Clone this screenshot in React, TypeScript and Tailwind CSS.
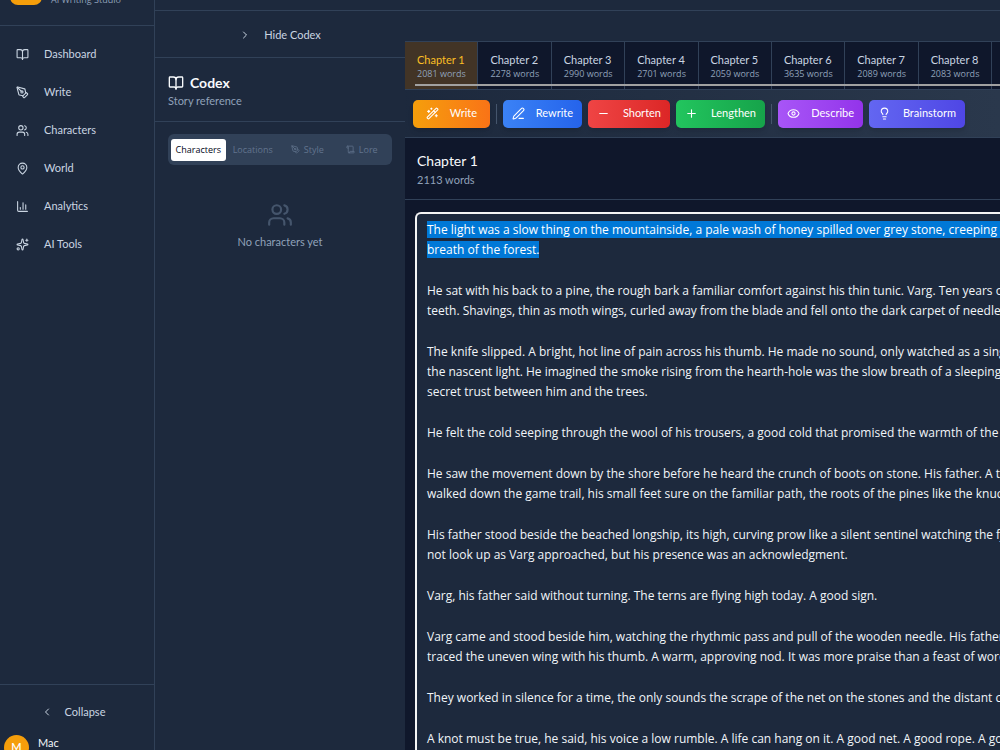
import { useState } from 'react';
import type { ReactNode } from 'react';
import type { LucideIcon } from 'lucide-react';
import {
  BookOpen,
  ChartColumn,
  ChevronLeft,
  ChevronRight,
  Eye,
  Lightbulb,
  MapPin,
  Minus,
  PenLine,
  PenTool,
  Plus,
  Scroll,
  Sparkles,
  Users,
  WandSparkles,
} from 'lucide-react';

const NAV_ITEMS: { label: string; icon: LucideIcon }[] = [
  { label: 'Dashboard', icon: BookOpen },
  { label: 'Write', icon: PenTool },
  { label: 'Characters', icon: Users },
  { label: 'World', icon: MapPin },
  { label: 'Analytics', icon: ChartColumn },
  { label: 'AI Tools', icon: Sparkles },
];

const CHAPTERS = [
  { title: 'Chapter 1', words: 2081 },
  { title: 'Chapter 2', words: 2278 },
  { title: 'Chapter 3', words: 2990 },
  { title: 'Chapter 4', words: 2701 },
  { title: 'Chapter 5', words: 2059 },
  { title: 'Chapter 6', words: 3635 },
  { title: 'Chapter 7', words: 2089 },
  { title: 'Chapter 8', words: 2083 },
];

// Each paragraph is a list of lines
const PARAGRAPHS = [
  [
    'The light was a slow thing on the mountainside, a pale wash of honey spilled over grey stone, creeping down',
    'breath of the forest.',
  ],
  [
    'He sat with his back to a pine, the rough bark a familiar comfort against his thin tunic. Varg. Ten years old',
    'teeth. Shavings, thin as moth wings, curled away from the blade and fell onto the dark carpet of needles',
  ],
  [
    'The knife slipped. A bright, hot line of pain across his thumb. He made no sound, only watched as a single',
    'the nascent light. He imagined the smoke rising from the hearth-hole was the slow breath of a sleeping giant',
    'secret trust between him and the trees.',
  ],
  ['He felt the cold seeping through the wool of his trousers, a good cold that promised the warmth of the fire'],
  [
    'He saw the movement down by the shore before he heard the crunch of boots on stone. His father. A tall',
    'walked down the game trail, his small feet sure on the familiar path, the roots of the pines like the knuckles',
  ],
  [
    'His father stood beside the beached longship, its high, curving prow like a silent sentinel watching the fjord',
    'not look up as Varg approached, but his presence was an acknowledgment.',
  ],
  ['Varg, his father said without turning. The terns are flying high today. A good sign.'],
  [
    'Varg came and stood beside him, watching the rhythmic pass and pull of the wooden needle. His father gave',
    'traced the uneven wing with his thumb. A warm, approving nod. It was more praise than a feast of words.',
  ],
  ['They worked in silence for a time, the only sounds the scrape of the net on the stones and the distant cry'],
  ['A knot must be true, he said, his voice a low rumble. A life can hang on it. A good net. A good rope. A good'],
];

function Sidebar() {
  return (
    <aside className="flex w-[155px] shrink-0 flex-col border-r border-slate-700 bg-slate-800">
      <div className="flex h-[26px] items-end gap-[9px] border-b border-slate-700 pb-5 pl-[10px]">
        <div className="h-8 w-8 shrink-0 rounded-lg bg-[#f59e0b]" />
        <p className="font-['Open_Sans',sans-serif] text-[9px] leading-[10px] whitespace-nowrap text-slate-400">
          AI Writing Studio
        </p>
      </div>

      <nav className="flex flex-1 flex-col gap-2 px-2 pt-[13px]">
        {NAV_ITEMS.map(({ label, icon: Icon }) => (
          <a
            key={label}
            href="#"
            className="flex h-[30px] items-center gap-[15px] rounded-md pl-2 text-[11px] text-slate-300 hover:bg-slate-700"
          >
            <Icon className="h-[13px] w-[13px]" />
            {label}
          </a>
        ))}
      </nav>

      <div className="h-[66px] border-t border-slate-700 pt-3">
        <button type="button" className="flex h-[30px] w-full items-center justify-center gap-3 pr-2 text-[11px] text-slate-300">
          <ChevronLeft className="h-3 w-3" />
          Collapse
        </button>
        <div className="flex items-start gap-[9px] pt-2 pl-1">
          <span className="flex h-[25px] w-[25px] shrink-0 items-center justify-center rounded-full bg-[#f59e0b] text-[11px] font-semibold text-white">
            M
          </span>
          <span className="text-[11px] leading-4 text-slate-100">Mac</span>
        </div>
      </div>
    </aside>
  );
}

function CodexTab({ label, icon: Icon, active, onSelect }: { label: string; icon?: LucideIcon; active: boolean; onSelect: () => void }) {
  return (
    <button
      type="button"
      role="tab"
      aria-selected={active}
      onClick={onSelect}
      className={`flex h-[22px] items-center justify-center gap-1 rounded-[3px] font-['Open_Sans',sans-serif] text-[9px] ${
        active ? 'bg-white text-slate-950' : 'text-slate-500'
      }`}
    >
      {Icon && <Icon className="h-[9px] w-[9px]" />}
      {label}
    </button>
  );
}

function Codex() {
  const [tab, setTab] = useState('Characters');

  return (
    <section className="w-[250px] shrink-0 bg-slate-800">
      <div className="flex h-[47px] items-center justify-center border-b border-slate-700">
        <button type="button" className="flex items-center gap-[13px] pt-0.5 text-[11px] text-slate-300">
          <ChevronRight className="h-3 w-3" />
          Hide Codex
        </button>
      </div>

      <div className="h-16 border-b border-slate-700 px-[13px] pt-4">
        <h2 className="flex items-center gap-[6px] text-[14px] leading-[18px] font-bold text-slate-50">
          <BookOpen className="h-4 w-4" />
          Codex
        </h2>
        <p className="text-[11px] leading-[18px] text-slate-400">Story reference</p>
      </div>

      <div className="px-[13px] pt-3">
        <div role="tablist" className="grid h-[31px] grid-cols-4 items-center rounded-md bg-slate-700 px-[3px]">
          <CodexTab label="Characters" active={tab === 'Characters'} onSelect={() => setTab('Characters')} />
          <CodexTab label="Locations" active={tab === 'Locations'} onSelect={() => setTab('Locations')} />
          <CodexTab label="Style" icon={PenTool} active={tab === 'Style'} onSelect={() => setTab('Style')} />
          <CodexTab label="Lore" icon={Scroll} active={tab === 'Lore'} onSelect={() => setTab('Lore')} />
        </div>
        <div className="flex flex-col items-center gap-[5px] pt-[37px]">
          <Users className="h-[26px] w-[26px] text-slate-600" />
          <p className="text-[11px] leading-[18px] text-slate-400">No characters yet</p>
        </div>
      </div>
    </section>
  );
}

function ToolButton({ icon: Icon, className, children }: { icon: LucideIcon; className: string; children: ReactNode }) {
  return (
    <button
      type="button"
      className={`flex h-7 shrink-0 items-center justify-between rounded-[5px] bg-linear-to-r text-[11px] text-white shadow-md ${className}`}
    >
      <Icon className="h-[13px] w-[13px]" />
      {children}
    </button>
  );
}

function Toolbar() {
  return (
    <div className="flex h-12 items-center gap-[6px] border-b border-slate-700 bg-linear-to-r from-slate-800 to-[#2a384c] pl-2">
      <ToolButton icon={WandSparkles} className="w-[77px] px-[13px] from-[#f59e0b] to-[#f97316]">
        Write
      </ToolButton>
      <div className="h-5 w-px shrink-0 bg-slate-600" />
      <ToolButton icon={PenLine} className="w-[79px] px-[9px] from-[#3b82f6] to-[#2563eb]">
        Rewrite
      </ToolButton>
      <ToolButton icon={Minus} className="w-[82px] px-[9px] from-[#ef4444] to-[#dc2626]">
        Shorten
      </ToolButton>
      <ToolButton icon={Plus} className="w-[89px] px-[9px] from-[#22c55e] to-[#16a34a]">
        Lengthen
      </ToolButton>
      <div className="h-5 w-px shrink-0 bg-slate-600" />
      <ToolButton icon={Eye} className="w-[85px] px-[9px] from-[#a855f7] to-[#9333ea]">
        Describe
      </ToolButton>
      <ToolButton icon={Lightbulb} className="w-24 px-[9px] from-[#6366f1] to-[#4f46e5]">
        Brainstorm
      </ToolButton>
    </div>
  );
}

function ChapterTabs() {
  const [current, setCurrent] = useState('Chapter 1');

  return (
    <div className="relative h-[49px] overflow-hidden border-t border-b border-slate-700 bg-slate-900">
      <div className="grid h-full w-[587px] grid-cols-8">
        {CHAPTERS.map(({ title, words }) => (
          <button
            key={title}
            type="button"
            onClick={() => setCurrent(title)}
            className={`flex flex-col items-start border-r border-slate-700 pt-[10px] pl-3 whitespace-nowrap ${
              title === current ? 'bg-[#423426] text-[#fbbf24]' : 'text-slate-300'
            }`}
          >
            <span className="text-[11px] leading-4">{title}</span>
            <span className="font-['Open_Sans',sans-serif] text-[9px] leading-3 text-slate-400">{words} words</span>
          </button>
        ))}
      </div>
      {/* scroll track under the tabs */}
      <div className="absolute right-0 bottom-[3px] left-[10px] h-[2px] bg-neutral-400" />
    </div>
  );
}

function Editor() {
  return (
    <div className="flex-1 pt-3 pl-[10px]">
      <div
        role="textbox"
        aria-multiline="true"
        aria-label="Chapter text"
        contentEditable
        suppressContentEditableWarning
        spellCheck={false}
        className="flex h-full flex-col gap-[21px] rounded-tl-md border-t-2 border-l-2 border-neutral-100 bg-slate-800 pt-[6px] pl-[10px] font-['Open_Sans',sans-serif] text-[12px] leading-5 whitespace-nowrap text-slate-100 outline-none"
      >
        {PARAGRAPHS.map((lines, index) => (
          <p key={lines[0]}>
            {lines.map((line) => (
              <span key={line} className="block">
                <span className={index === 0 ? 'bg-[#0078d7] text-white' : ''}>{line}</span>
              </span>
            ))}
          </p>
        ))}
      </div>
    </div>
  );
}

export default function App() {
  return (
    <div className="flex h-screen overflow-hidden bg-slate-900 font-['Lato','Open_Sans',sans-serif]">
      <Sidebar />
      <div className="flex min-w-0 flex-1 flex-col">
        <header className="h-[11px] shrink-0 border-b border-slate-700 bg-slate-800" />
        <div className="flex min-h-0 flex-1">
          <Codex />
          <main className="flex min-w-0 flex-1 flex-col overflow-hidden bg-slate-900">
            <div className="h-[30px] shrink-0 bg-slate-800" />
            <ChapterTabs />
            <Toolbar />
            <div className="h-[62px] shrink-0 border-b border-slate-700 pt-[13px] pl-3">
              <h1 className="text-[14px] leading-5 text-slate-50">Chapter 1</h1>
              <p className="text-[11px] leading-[18px] text-slate-400">2113 words</p>
            </div>
            <Editor />
          </main>
        </div>
      </div>
    </div>
  );
}
